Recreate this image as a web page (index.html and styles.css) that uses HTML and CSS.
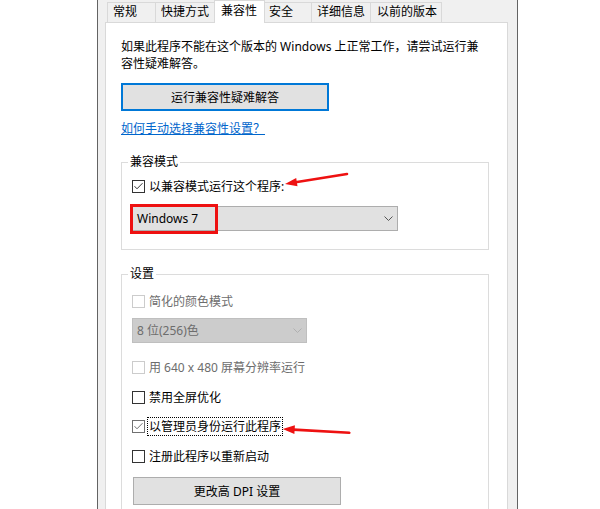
FILE: index.html
```html
<!DOCTYPE html>
<html lang="zh-CN">
<head>
<meta charset="utf-8">
<title>兼容性</title>
<link rel="stylesheet" href="styles.css">
</head>
<body>
<div class="window">
  <div class="tabs">
    <div class="tab">常规</div>
    <div class="tab">快捷方式</div>
    <div class="tab active">兼容性</div>
    <div class="tab">安全</div>
    <div class="tab">详细信息</div>
    <div class="tab">以前的版本</div>
  </div>
  <div class="panel">
    <p class="intro">如果此程序不能在这个版本的 Windows 上正常工作，请尝试运行兼<br>容性疑难解答。</p>
    <button class="btn btn-default">运行兼容性疑难解答</button>
    <a class="help-link">如何手动选择兼容性设置？</a>

    <fieldset class="group group-compat">
      <legend>兼容模式</legend>
      <label class="check-row">
        <svg class="cb" width="13" height="13" viewBox="0 0 13 13"><rect x="0.5" y="0.5" width="12" height="12" fill="#fff" stroke="currentColor"/><path d="M2.5 6.2 L5 8.8 L10.5 3.2" fill="none" stroke="currentColor"/></svg>
        <span>以兼容模式运行这个程序:</span>
        <svg class="arrow arrow-compat" width="72" height="24" viewBox="0 0 72 24"><line x1="67" y1="6" x2="15.5" y2="14.3" stroke="#ee1111" stroke-width="2.6" stroke-linecap="round"/><polygon points="5,16 17.5,18.3 16.2,10" fill="#ee1111"/></svg>
      </label>
      <div class="select select-wide">
        <span>Windows 7</span>
        <svg class="chev" width="9" height="5" viewBox="0 0 9 5"><path d="M0.5 0.5 L4.5 4.5 L8.5 0.5" fill="none" stroke="#555"/></svg>
        <div class="mark"></div>
      </div>
    </fieldset>

    <fieldset class="group group-settings">
      <legend>设置</legend>
      <label class="check-row disabled">
        <svg class="cb" width="13" height="13" viewBox="0 0 13 13"><rect x="0.5" y="0.5" width="12" height="12" fill="#fff" stroke="currentColor"/></svg>
        <span>简化的颜色模式</span>
      </label>
      <div class="select select-narrow disabled">
        <span>8 位(256)色</span>
        <svg class="chev" width="9" height="5" viewBox="0 0 9 5"><path d="M0.5 0.5 L4.5 4.5 L8.5 0.5" fill="none" stroke="#b0b0b0"/></svg>
      </div>
      <label class="check-row disabled row-res">
        <svg class="cb" width="13" height="13" viewBox="0 0 13 13"><rect x="0.5" y="0.5" width="12" height="12" fill="#fff" stroke="currentColor"/></svg>
        <span>用 640 x 480 屏幕分辨率运行</span>
      </label>
      <label class="check-row row-fullscreen">
        <svg class="cb" width="13" height="13" viewBox="0 0 13 13"><rect x="0.5" y="0.5" width="12" height="12" fill="#fff" stroke="currentColor"/></svg>
        <span>禁用全屏优化</span>
      </label>
      <label class="check-row row-admin">
        <svg class="cb cb-soft" width="13" height="13" viewBox="0 0 13 13"><rect x="0.5" y="0.5" width="12" height="12" fill="#fff" stroke="currentColor"/><path d="M2.5 6.2 L5 8.8 L10.5 3.2" fill="none" stroke="currentColor"/></svg>
        <span class="focus">以管理员身份运行此程序</span>
        <svg class="arrow arrow-admin" width="72" height="24" viewBox="0 0 72 24"><line x1="69.3" y1="16.7" x2="13.5" y2="13.6" stroke="#ee1111" stroke-width="2.6" stroke-linecap="round"/><polygon points="2.7,13 14.9,9.2 14.4,18" fill="#ee1111"/></svg>
      </label>
      <label class="check-row row-restart">
        <svg class="cb" width="13" height="13" viewBox="0 0 13 13"><rect x="0.5" y="0.5" width="12" height="12" fill="#fff" stroke="currentColor"/></svg>
        <span>注册此程序以重新启动</span>
      </label>
      <button class="btn btn-dpi">更改高 DPI 设置</button>
    </fieldset>
  </div>
</div>
</body>
</html>
```

FILE: styles.css
```css
html, body {
  margin: 0;
  height: 509px;
  overflow: hidden;
  background: #fff;
}

body {
  font-family: "Noto Sans", "Noto Sans CJK SC", sans-serif;
  font-size: 12px;
  line-height: 17px;
  color: #000;
}

.window {
  margin-left: 97px;
  width: 421px;
  height: 509px;
  box-sizing: border-box;
  border-left: 1px solid #636363;
  border-right: 1px solid #636363;
  background: #f0f0f0;
  padding: 0 9px 0 7px;
  overflow: hidden;
  display: flex;
  flex-direction: column;
}

/* tabs */
.tabs {
  flex: none;
  height: 22px;
  display: flex;
  align-items: flex-end;
  padding-left: 2px;
}

.tab {
  box-sizing: border-box;
  height: 20px;
  border: 1px solid #d9d9d9;
  border-bottom: none;
  background: #f0f0f0;
  padding: 0 0 0 5px;
  margin-left: -1px;
  white-space: nowrap;
}

.tab:first-child { margin-left: 0; width: 49px; }
.tab:nth-child(2) { width: 60px; }
.tab:nth-child(3) { width: 51px; }
.tab:nth-child(4) { width: 48px; padding-left: 4px; }
.tab:nth-child(5) { width: 60px; }
.tab:nth-child(6) { width: 72px; padding-left: 6px; }

.tab.active {
  position: relative;
  z-index: 1;
  height: 23px;
  margin-bottom: -1px;
  background: #fff;
  padding-top: 1px;
  padding-left: 6px;
}

/* panel */
.panel {
  flex: 1;
  background: #fff;
  border: 1px solid #d9d9d9;
  border-bottom: none;
  padding: 15px 0 0 15px;
}

.intro {
  margin: 0;
  white-space: nowrap;
}

.btn {
  display: block;
  box-sizing: border-box;
  width: 208px;
  height: 28px;
  padding: 0;
  margin: 11px 0 0;
  background: #e1e1e1;
  border: 1px solid #adadad;
  font: inherit;
  color: #000;
}

.btn-default {
  border: 2px solid #0078d7;
}

.help-link {
  display: block;
  width: max-content;
  margin-top: 9px;
  color: #0066cc;
  text-decoration: underline;
}

/* group boxes */
.group {
  box-sizing: border-box;
  width: 368px;
  min-width: 0;
  margin: 16px 0 0;
  border: 1px solid #dcdcdc;
  padding: 6px 0 18px 10px;
}

.group legend {
  padding: 0 2px 2px;
  margin-left: -4px;
  line-height: 17px;
}

.group-settings {
  margin-top: 15px;
  padding-top: 9px;
  padding-bottom: 20px;
}

.check-row {
  position: relative;
  display: flex;
  align-items: center;
  width: max-content;
  white-space: nowrap;
}

.check-row.disabled {
  color: #6d6d6d;
}

.cb {
  flex: none;
  display: block;
  margin-right: 4px;
  color: #333;
}

.check-row.disabled .cb {
  color: #cccccc;
}

.cb-soft {
  color: #707070;
}

.row-res { margin-top: 16px; }
.row-fullscreen { margin-top: 13px; }
.row-admin { margin-top: 11px; }
.row-restart { margin-top: 12px; }

.focus {
  margin-left: -2px;
  padding: 0 1px;
  border: 1px dotted #000;
}

.arrow {
  position: absolute;
  left: 148px;
  pointer-events: none;
}

.arrow-compat { top: -10px; }
.arrow-admin { top: -1px; }

/* drop-downs */
.select {
  position: relative;
  box-sizing: border-box;
  display: flex;
  align-items: center;
  justify-content: space-between;
  height: 25px;
  margin-top: 11px;
  padding: 0 4px 0 4px;
  background: #e1e1e1;
  border: 1px solid #adadad;
  white-space: nowrap;
}

.select-wide { width: 266px; }

.select-narrow {
  width: 175px;
  margin-top: 8px;
}

.select.disabled {
  background: #cccccc;
  border-color: #bfbfbf;
  color: #6d6d6d;
}

.chev {
  display: block;
  flex: none;
}

.mark {
  position: absolute;
  left: -3px;
  top: -3px;
  width: 88px;
  height: 30px;
  box-sizing: border-box;
  border: 3px solid #ee1111;
}

.btn-dpi {
  margin-top: 12px;
  margin-left: 1px;
}
```
